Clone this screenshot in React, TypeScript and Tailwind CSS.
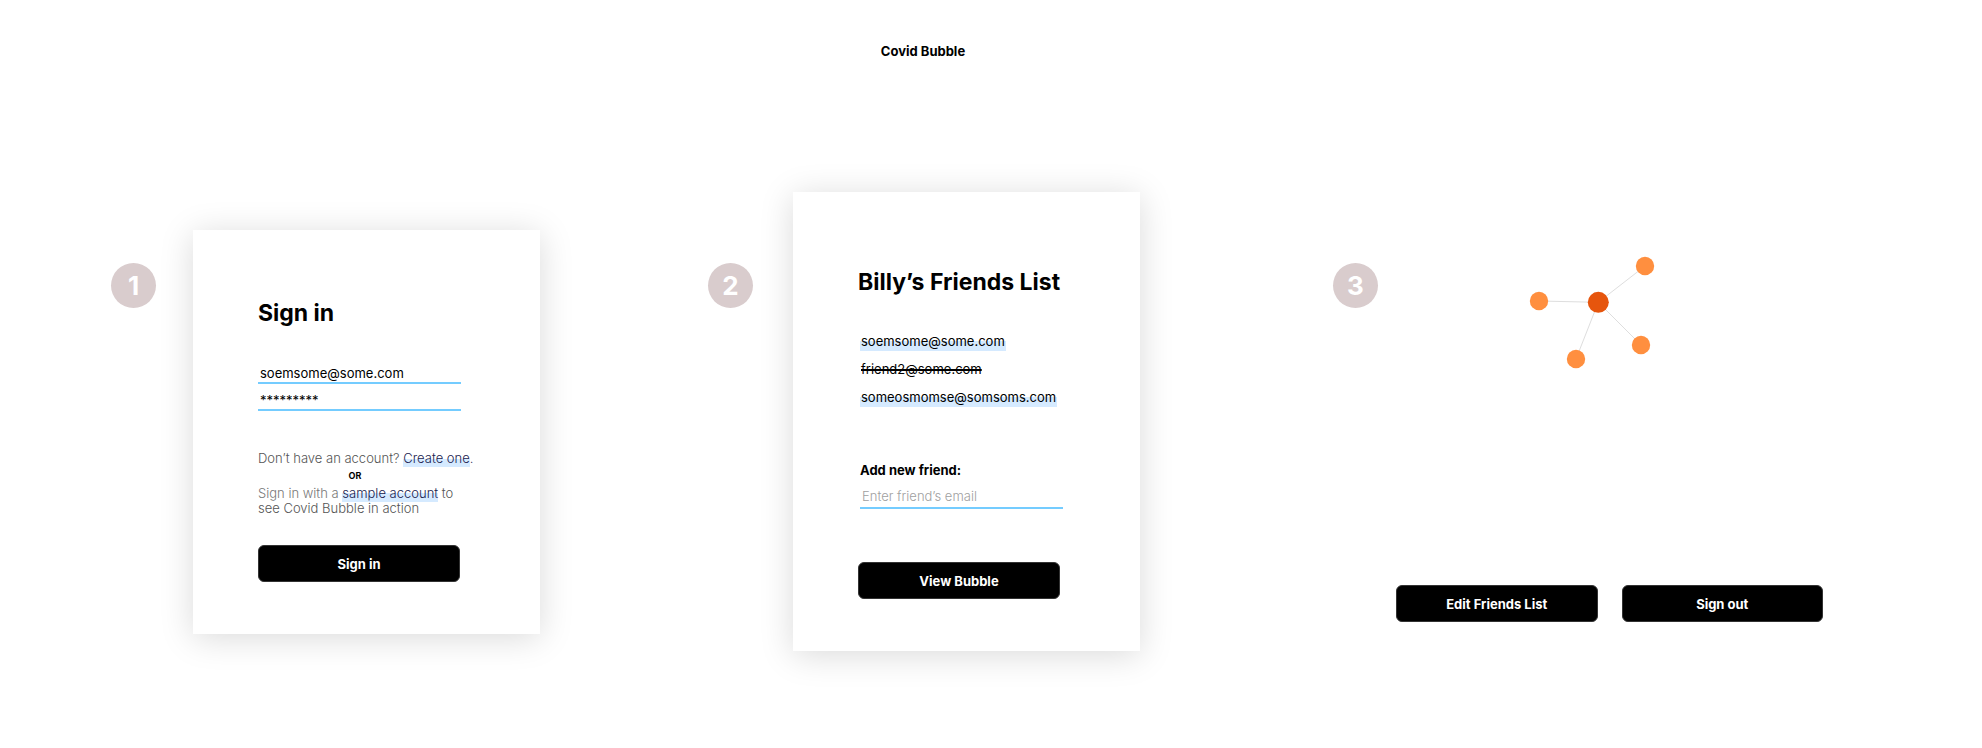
import type { ReactNode } from "react";

function Badge({ children }: { children: ReactNode }) {
  return (
    <span className="mt-[71px] flex size-[45px] shrink-0 items-center justify-center rounded-full bg-[#d9cccd] pt-px text-[26px] leading-8 font-bold text-white">
      {children}
    </span>
  );
}

function Button({ children }: { children: ReactNode }) {
  return (
    <button
      type="button"
      className="h-[37px] w-full max-w-[202px] rounded-md border border-[#333] bg-black text-[13px] leading-5 font-bold text-white"
    >
      {children}
    </button>
  );
}

function Card({ children }: { children: ReactNode }) {
  return (
    <div className="w-full max-w-[347px] bg-white px-[65px] pb-[52px] shadow-[0_4px_32px_rgba(0,0,0,0.15)]">
      {children}
    </div>
  );
}

const field =
  "block h-[21px] w-full max-w-[203px] rounded-none border-b-2 border-[#74ccff] bg-transparent px-[2px] text-[13px] outline-none placeholder:font-light placeholder:text-[#a0a0a0] placeholder:opacity-100";
const highlight = "bg-linear-to-b from-transparent from-50% to-[#d5eaff] to-50%";

const friends = [
  { email: "soemsome@some.com", removed: false },
  { email: "friend2@some.com", removed: true },
  { email: "someosmomse@somsoms.com", removed: false },
];

const contacts = [
  { x: 116, y: 10 },
  { x: 112, y: 89 },
  { x: 47, y: 103 },
  { x: 10, y: 45 },
];

function BubbleGraph() {
  return (
    <svg width="126" height="113" viewBox="0 0 126 113" role="img" aria-label="Friends bubble">
      {contacts.map((c) => (
        <line key={`${c.x}-${c.y}`} x1="69.3" y1="46.3" x2={c.x} y2={c.y} stroke="#dedede" />
      ))}
      {contacts.map((c) => (
        <circle key={`${c.x}-${c.y}`} cx={c.x} cy={c.y} r="9.2" fill="#ff8f3f" />
      ))}
      <circle cx="69.3" cy="46.3" r="10.5" fill="#e6550d" />
    </svg>
  );
}

export default function App() {
  return (
    <div className="min-h-screen bg-white font-['Inter',sans-serif] text-[13px] leading-5 text-black">
      <header className="pt-[41px] pr-[136px] text-center">
        <h1 className="font-bold">Covid Bubble</h1>
      </header>
      <main className="mt-[131px] grid grid-cols-[597fr_625fr_490fr] items-start pr-[159px] pb-24 pl-[111px]">
        <section className="flex items-start gap-[37px]">
          <Badge>1</Badge>
          <div className="mt-[38px] w-full max-w-[347px]">
            <Card>
              <h2 className="pt-[67px] text-[23px] leading-8 font-bold">Sign in</h2>
              <form className="mt-[34px]">
                <div className="flex flex-col gap-[6px]">
                  <input aria-label="Email" type="email" defaultValue="soemsome@some.com" className={field} />
                  <input aria-label="Password" type="text" defaultValue="*********" className={field} />
                </div>
                <p className="mt-[37px] font-light whitespace-nowrap text-[#555]">
                  Don’t have an account?{" "}
                  <a href="#create" className="text-[#20224f]">
                    <span className={`${highlight} pb-px`}>Create one</span>.
                  </a>
                </p>
                <p className="mt-[2px] max-w-[202px] pr-2 text-center text-[9px] leading-3 font-bold">OR</p>
                <p className="mt-1 mb-[29px] leading-[15px] font-light whitespace-nowrap text-[#555]">
                  <span className="text-[#777]">Sign in with a</span>{" "}
                  <a href="#sample" className={`${highlight} pb-px text-[#20224f]`}>
                    sample account
                  </a>{" "}
                  to
                  <br />
                  see Covid Bubble in action
                </p>
                <Button>Sign in</Button>
              </form>
            </Card>
          </div>
        </section>

        <section className="flex items-start gap-[40px]">
          <Badge>2</Badge>
          <Card>
            <h2 className="pt-[74px] text-[23px] leading-8 font-bold whitespace-nowrap">Billy’s Friends List</h2>
            <ul className="mt-[33px] flex flex-col items-start gap-2 pl-[2px]">
              {friends.map((f) => (
                <li
                  key={f.email}
                  className={f.removed ? "px-px line-through decoration-2" : `${highlight} px-px`}
                >
                  {f.email}
                </li>
              ))}
            </ul>
            <form className="mt-[53px]">
              <div className="mb-[53px] flex flex-col gap-[6px] pl-[2px]">
                <label htmlFor="friend" className="font-bold">
                  Add new friend:
                </label>
                <input
                  id="friend"
                  type="email"
                  placeholder="Enter friend’s email"
                  className={`${field} h-[23px] pb-[2px]`}
                />
              </div>
              <Button>View Bubble</Button>
            </form>
          </Card>
        </section>

        <section className="flex items-start gap-[18px]">
          <Badge>3</Badge>
          <div className="flex-1 pt-[64px]">
            <div className="pl-[133px]">
              <BubbleGraph />
            </div>
            <div className="mt-[216px] flex gap-6">
              <Button>Edit Friends List</Button>
              <Button>Sign out</Button>
            </div>
          </div>
        </section>
      </main>
    </div>
  );
}
